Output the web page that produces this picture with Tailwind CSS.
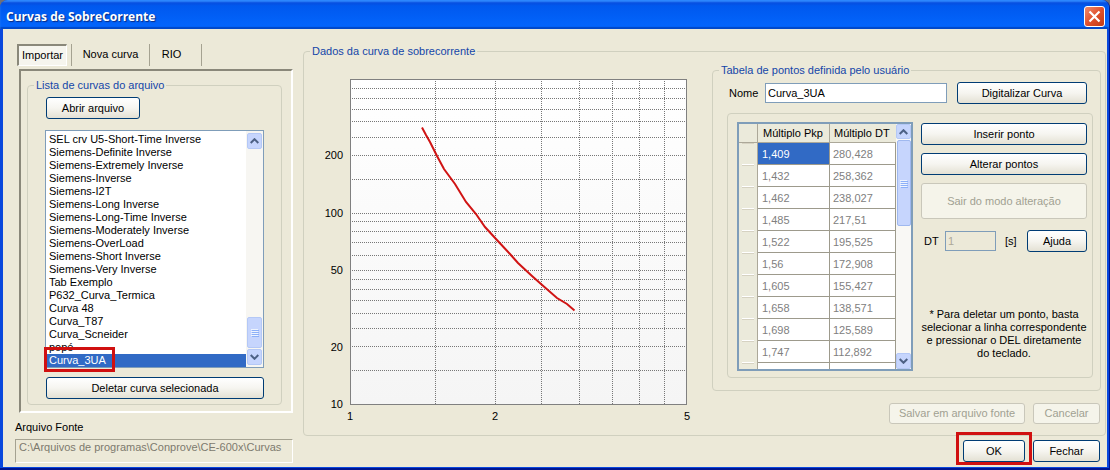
<!DOCTYPE html>
<html lang="pt-BR">
<head>
<meta charset="utf-8">
<title>Curvas de SobreCorrente</title>
<script src="https://cdn.jsdelivr.net/npm/@tailwindcss/browser@4"></script>
</head>
<body class="min-h-screen bg-[#6f6f78] font-['Liberation_Sans',Arial,sans-serif] text-[11px] leading-[13px] text-black">
<div class="flex min-h-screen flex-col overflow-hidden rounded-t-lg border-r border-b-2 border-[#001590] bg-[#0a48dd]">

  <header class="flex h-[29px] items-center justify-between bg-linear-to-b from-[#0a3fd0] from-0% via-[#0058ee] via-20% to-[#0364fb] to-85% pt-1 pr-[4px] pl-[6px] shadow-[inset_0_2px_2px_#2f8bff,inset_0_-2px_1px_#0148c8]">
    <h1 class="font-['Open_Sans',sans-serif] text-[12px] leading-4 font-bold text-white [text-shadow:1px_1px_1px_#0a2a80]">Curvas de SobreCorrente</h1>
    <button type="button" aria-label="Fechar janela" class="flex size-[21px] items-center justify-center rounded-[3px] border border-white bg-linear-to-br from-[#ee8a6c] via-[#e0502c] to-[#c03a14]">
      <svg class="size-[13px]" viewBox="0 0 13 13" fill="none" stroke="#fff" stroke-width="2.2"><path d="M1.5 1.5l10 10M11.500 1.500l-10 10"/></svg>
    </button>
  </header>

  <main class="mr-[2px] mb-px ml-[3px] flex flex-1 gap-[10px] bg-[#ece9d8] pt-[15px] pr-px pl-[11px]">

    <section class="w-[279px] shrink-0">
      <div class="ml-[3px] flex h-[22px]" role="tablist">
        <button type="button" role="tab" aria-selected="true" class="mr-1 w-[50px] border-t-2 border-r border-b border-l-2 border-t-[#8a887a] border-r-white border-b-white border-l-[#8a887a] bg-[#f6f5ee]">Importar</button>
        <button type="button" role="tab" aria-selected="false" class="w-[79px] border-x border-[#a5a291] pb-[2px]">Nova curva</button>
        <button type="button" role="tab" aria-selected="false" class="w-[52px] border-r border-[#a5a291] pr-2 pb-[2px]">RIO</button>
      </div>

      <div class="mt-[3px] ml-[5px] border-2 border-t-[#8a887a] border-r-white border-b-white border-l-[#8a887a] pt-[7px] pr-[9px] pb-[6px] pl-[6px]">
        <fieldset class="rounded-[4px] border border-[#d0d0bf] px-[17px] pb-[5px]">
          <legend class="-ml-[11px] px-[2px] leading-[14px] text-[#1446a8]">Lista de curvas do arquivo</legend>
          <button type="button" class="mt-[5px] mb-[11px] ml-px block h-[22px] w-[94px] rounded-[3px] border border-[#003c74] bg-linear-to-b from-white via-[#f6f5f0] to-[#e4e1d4]">Abrir arquivo</button>
          <div class="relative flex h-[238px] border border-[#7f9db9] bg-white">
            <select size="18" aria-label="Lista de curvas do arquivo" class="h-[236px] min-w-0 flex-1 overflow-hidden bg-white pt-[2px] outline-none">
              <option class="h-[13px] min-h-0 p-0 pl-[3px] leading-[13px]">SEL crv U5-Short-Time Inverse</option>
              <option class="h-[13px] min-h-0 p-0 pl-[3px] leading-[13px]">Siemens-Definite Inverse</option>
              <option class="h-[13px] min-h-0 p-0 pl-[3px] leading-[13px]">Siemens-Extremely Inverse</option>
              <option class="h-[13px] min-h-0 p-0 pl-[3px] leading-[13px]">Siemens-Inverse</option>
              <option class="h-[13px] min-h-0 p-0 pl-[3px] leading-[13px]">Siemens-I2T</option>
              <option class="h-[13px] min-h-0 p-0 pl-[3px] leading-[13px]">Siemens-Long Inverse</option>
              <option class="h-[13px] min-h-0 p-0 pl-[3px] leading-[13px]">Siemens-Long-Time Inverse</option>
              <option class="h-[13px] min-h-0 p-0 pl-[3px] leading-[13px]">Siemens-Moderately Inverse</option>
              <option class="h-[13px] min-h-0 p-0 pl-[3px] leading-[13px]">Siemens-OverLoad</option>
              <option class="h-[13px] min-h-0 p-0 pl-[3px] leading-[13px]">Siemens-Short Inverse</option>
              <option class="h-[13px] min-h-0 p-0 pl-[3px] leading-[13px]">Siemens-Very Inverse</option>
              <option class="h-[13px] min-h-0 p-0 pl-[3px] leading-[13px]">Tab Exemplo</option>
              <option class="h-[13px] min-h-0 p-0 pl-[3px] leading-[13px]">P632_Curva_Termica</option>
              <option class="h-[13px] min-h-0 p-0 pl-[3px] leading-[13px]">Curva 48</option>
              <option class="h-[13px] min-h-0 p-0 pl-[3px] leading-[13px]">Curva_T87</option>
              <option class="h-[13px] min-h-0 p-0 pl-[3px] leading-[13px]">Curva_Scneider</option>
              <option class="h-[13px] min-h-0 p-0 pl-[3px] leading-[13px]">popé</option>
              <option selected class="h-[13px] min-h-0 bg-[#316ac5] bg-linear-to-b from-[#316ac5] to-[#316ac5] p-0 pl-[3px] leading-[13px] text-white">Curva_3UA</option>
            </select>
            <div class="flex w-[17px] flex-col items-center bg-[#f7f6f2] py-[2px]">
              <button type="button" aria-label="Rolar para cima" class="flex h-[16px] w-[15px] items-center justify-center rounded-[2px] border border-[#b4c8f6] bg-[#c6d5fd]"><svg class="h-[6px] w-[9px]" viewBox="0 0 9 6" fill="none" stroke="#4d6185" stroke-width="2"><path d="M.7 5l3.800-3.800L8.300 5"/></svg></button>
              <div class="flex-1"></div>
              <div class="flex h-[31px] w-[15px] flex-col items-center justify-center gap-px rounded-[2px] border border-[#b4c8f6] bg-[#c6d5fd]">
                <i class="h-px w-[7px] bg-[#eef4fe] shadow-[1px_1px_0_#8cb0f8]"></i><i class="h-px w-[7px] bg-[#eef4fe] shadow-[1px_1px_0_#8cb0f8]"></i><i class="h-px w-[7px] bg-[#eef4fe] shadow-[1px_1px_0_#8cb0f8]"></i><i class="h-px w-[7px] bg-[#eef4fe] shadow-[1px_1px_0_#8cb0f8]"></i>
              </div>
              <button type="button" aria-label="Rolar para baixo" class="mt-px flex h-[16px] w-[15px] items-center justify-center rounded-[2px] border border-[#b4c8f6] bg-[#c6d5fd]"><svg class="h-[6px] w-[9px]" viewBox="0 0 9 6" fill="none" stroke="#4d6185" stroke-width="2"><path d="M.7 1l3.800 3.800L8.300 1"/></svg></button>
            </div>
            <div class="pointer-events-none absolute -bottom-[5px] -left-[2px] h-[25px] w-[71px] border-3 border-[#d01010]"></div>
          </div>
          <button type="button" class="mt-[9px] ml-px block h-[22px] w-[218px] rounded-[3px] border border-[#003c74] bg-linear-to-b from-white via-[#f6f5f0] to-[#e4e1d4]">Deletar curva selecionada</button>
        </fieldset>
      </div>

      <label for="fonte" class="mt-[8px] block pl-px">Arquivo Fonte</label>
      <input id="fonte" disabled value="C:\Arquivos de programas\Conprove\CE-600x\Curvas" class="mt-[5px] ml-px block h-[24px] w-[278px] border border-t-[#a5a291] border-r-white border-b-white border-l-[#a5a291] bg-transparent px-[3px] pb-2 text-[#7d7a6e]">
    </section>

    <section class="min-w-0 flex-1">
      <fieldset class="h-[392px] rounded-[4px] border border-[#d0d0bf] pr-1 pl-2">
        <legend class="-ml-[2px] px-[2px] leading-[14px] text-[#1446a8]">Dados da curva de sobrecorrente</legend>
        <div class="flex gap-2">

          <svg class="mt-2 h-[358px] min-w-0 flex-1" viewBox="312 66 392 358" role="img" aria-label="Curva de sobrecorrente">
            <defs><linearGradient id="plot" x1="0" y1="0" x2="0" y2="1"><stop offset="0" stop-color="#fff"/><stop offset="1" stop-color="#f5f5f5"/></linearGradient></defs>
            <rect x="350.500" y="79.500" width="336" height="325" fill="url(#plot)" stroke="#808080"/>
            <path fill="none" stroke="#777" stroke-dasharray="1 1" shape-rendering="crispEdges" d="M352 88.500H686M352 98.500H686M352 109.500H686M352 121.500H686M352 137.500H686M352 155.500H686M352 179.500H686M352 213.500H686M352 221.500H686M352 231.500H686M352 242.500H686M352 255.500H686M352 270.500H686M352 279.500H686M352 289.500H686M352 300.500H686M352 313.500H686M352 328.500H686M352 346.500H686M352 370.500H686M435.500 81V404M495.500 81V404M541.500 81V404M579.500 81V404M612.500 81V404M639.500 81V404M664.500 81V404"/>
            <path fill="none" stroke="#d01414" stroke-width="2" d="M422 127.500L426 135L430 142L434 150L437 156L444 169L455 184L466 202L476 214L485 227L496 239L510 254L518 263L532 276L541 284L557 298L567 304L574.500 310.500"/>
            <g font-size="11" text-anchor="end"><text x="343" y="159">200</text><text x="343" y="217">100</text><text x="343" y="274">50</text><text x="343" y="351">20</text><text x="343" y="408">10</text></g>
            <g font-size="11" text-anchor="middle"><text x="350" y="420">1</text><text x="495" y="420">2</text><text x="687" y="420">5</text></g>
          </svg>

          <div class="w-[389px] shrink-0 pt-[5px]">
            <fieldset class="rounded-[4px] border border-[#d0d0bf] pr-[7px] pb-3 pl-[14px]">
              <legend class="-ml-[8px] px-[2px] leading-[14px] text-[#1446a8]">Tabela de pontos definida pelo usuário</legend>
              <div class="mt-[5px] flex h-[22px] items-center pr-[6px] pl-[2px]">
                <label for="nome" class="w-[36px]">Nome</label>
                <input id="nome" value="Curva_3UA" class="h-[20px] min-w-0 flex-1 border border-[#7f9db9] bg-white px-[2px]">
                <button type="button" class="ml-[10px] h-[22px] w-[130px] rounded-[3px] border border-[#003c74] bg-linear-to-b from-white via-[#f6f5f0] to-[#e4e1d4]">Digitalizar Curva</button>
              </div>

              <div class="mt-[9px] flex gap-2 rounded-[4px] border border-[#d0d0bf] pt-2 pr-[5px] pb-[6px] pl-[9px]">
                <div class="flex h-[249px] w-[176px] shrink-0 overflow-hidden border-2 border-[#7f9db9] bg-white">
                  <div class="min-w-0 flex-1 overflow-hidden">
                    <table class="w-[157px] table-fixed border-separate border-spacing-0 text-left">
                      <colgroup><col class="w-[19px]"><col class="w-[71px]"><col class="w-[67px]"></colgroup>
                      <thead>
                        <tr class="h-[19px] bg-[#ebeadb]">
                          <th class="border-r border-b border-[#aca899] p-0"></th>
                          <th scope="col" class="border-b border-[#aca899] p-0 pl-[5px] font-normal whitespace-nowrap">Múltiplo Pkp</th>
                          <th scope="col" class="border-b border-l border-[#aca899] p-0 pl-[4px] font-normal whitespace-nowrap">Múltiplo DT</th>
                        </tr>
                      </thead>
                      <tbody id="pontos" class="text-[#808080]"></tbody>
                    </table>
                  </div>
                  <div class="flex w-[15px] flex-col items-center bg-[#f9f8f5]">
                    <button type="button" aria-label="Rolar para cima" class="flex h-[15px] w-[15px] items-center justify-center rounded-[2px] border border-[#b4c8f6] bg-[#c6d5fd]"><svg class="h-[6px] w-[9px]" viewBox="0 0 9 6" fill="none" stroke="#4d6185" stroke-width="2"><path d="M.7 5l3.800-3.800L8.300 5"/></svg></button>
                    <div class="mt-px flex h-[86px] w-[14px] flex-col items-center justify-center gap-px rounded-[2px] border border-[#9fb8ef] bg-[#c6d5fd]">
                      <i class="h-px w-[7px] bg-[#eef4fe] shadow-[1px_1px_0_#8cb0f8]"></i><i class="h-px w-[7px] bg-[#eef4fe] shadow-[1px_1px_0_#8cb0f8]"></i><i class="h-px w-[7px] bg-[#eef4fe] shadow-[1px_1px_0_#8cb0f8]"></i><i class="h-px w-[7px] bg-[#eef4fe] shadow-[1px_1px_0_#8cb0f8]"></i>
                    </div>
                    <div class="flex-1"></div>
                    <button type="button" aria-label="Rolar para baixo" class="flex h-[16px] w-[15px] items-center justify-center rounded-[2px] border border-[#b4c8f6] bg-[#c6d5fd]"><svg class="h-[6px] w-[9px]" viewBox="0 0 9 6" fill="none" stroke="#4d6185" stroke-width="2"><path d="M.7 1l3.800 3.800L8.300 1"/></svg></button>
                  </div>
                </div>

                <div class="flex min-w-0 flex-1 flex-col gap-2 pt-px">
                  <button type="button" class="h-[22px] rounded-[3px] border border-[#003c74] bg-linear-to-b from-white via-[#f6f5f0] to-[#e4e1d4]">Inserir ponto</button>
                  <button type="button" class="h-[22px] rounded-[3px] border border-[#003c74] bg-linear-to-b from-white via-[#f6f5f0] to-[#e4e1d4]">Alterar pontos</button>
                  <button type="button" disabled class="h-[36px] rounded-[3px] border border-[#c9c7ba] bg-[#f5f4ea] text-[#a1a192]">Sair do modo alteração</button>
                  <div class="mt-[3px] flex h-[22px] items-center">
                    <label for="dt" class="w-[24px] pl-[3px]">DT</label>
                    <input id="dt" disabled value="1" class="h-[20px] w-[51px] border border-[#7f9db9] bg-transparent px-[2px] text-[#aca899]">
                    <span class="ml-[9px]">[s]</span>
                    <button type="button" class="ml-auto h-[22px] w-[60px] rounded-[3px] border border-[#003c74] bg-linear-to-b from-white via-[#f6f5f0] to-[#e4e1d4]">Ajuda</button>
                  </div>
                  <p class="mt-[48px] text-center whitespace-nowrap">* Para deletar um ponto, basta<br>selecionar a linha correspondente<br>e pressionar o DEL diretamente<br>do teclado.</p>
                </div>
              </div>
            </fieldset>
            <div class="mt-3 flex justify-end gap-2 pr-px">
              <button type="button" disabled class="h-[21px] w-[136px] rounded-[3px] border border-[#c9c7ba] bg-[#f5f4ea] text-[#a1a192]">Salvar em arquivo fonte</button>
              <button type="button" disabled class="h-[21px] w-[67px] rounded-[3px] border border-[#c9c7ba] bg-[#f5f4ea] text-[#a1a192]">Cancelar</button>
            </div>
          </div>
        </div>
      </fieldset>

      <div class="mt-1 flex justify-end gap-2 pr-[6px]">
        <div class="relative flex">
          <button type="button" class="h-[22px] w-[62px] rounded-[3px] border border-[#003c74] bg-linear-to-b from-white via-[#f6f5f0] to-[#e4e1d4]">OK</button>
          <div class="pointer-events-none absolute -inset-x-[7px] -top-[8px] -bottom-[3px] border-3 border-[#d01010]"></div>
        </div>
        <button type="button" class="h-[22px] w-[67px] rounded-[3px] border border-[#003c74] bg-linear-to-b from-white via-[#f6f5f0] to-[#e4e1d4]">Fechar</button>
      </div>
    </section>
  </main>
</div>

<script>
  const pontos = [['1,409','280,428'],['1,432','258,362'],['1,462','238,027'],['1,485','217,51'],['1,522','195,525'],['1,56','172,908'],['1,605','155,427'],['1,658','138,571'],['1,698','125,589'],['1,747','112,892'],['','']];
  document.getElementById('pontos').innerHTML = pontos.map(([pkp, dt], i) => `
    <tr class="h-[22px]">
      <th class="border-r border-[#aca899] bg-[#ebeadb] p-0"><div class="mx-[3px] h-[21px] border-b border-white shadow-[0_-1px_0_#d6d2c2]"></div></th>
      <td class="border-b border-[#9d9a8c] p-0 pt-px pl-[4px] ${i === 0 ? 'bg-[#316ac5] text-white' : 'bg-white'}">${pkp}</td>
      <td class="border-x border-b border-[#9d9a8c] p-0 pt-px pl-[3px]">${dt}</td>
    </tr>`).join('');
</script>
</body>
</html>
